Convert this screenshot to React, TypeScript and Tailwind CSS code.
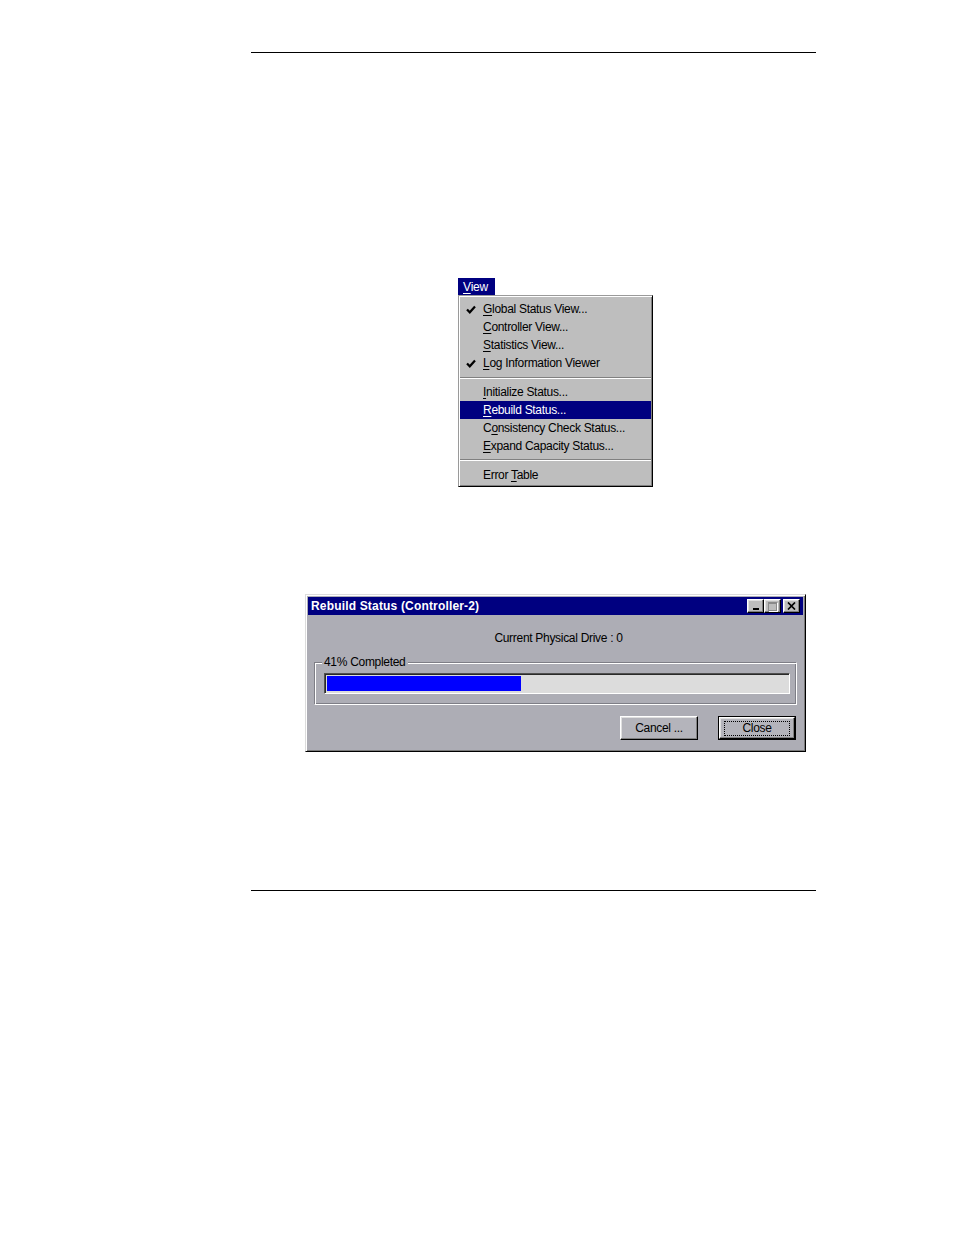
import React from "react";

// Win95-ish bevels
const raised =
  "border border-t-white border-l-white border-r-black border-b-black shadow-[inset_-1px_-1px_0_#808080,inset_1px_1px_0_#dfdfdf]";

type Item = { label: string; u: number; checked?: boolean; active?: boolean } | "sep" | "sep2";

const ITEMS: Item[] = [
  { label: "Global Status View...", u: 0, checked: true },
  { label: "Controller View...", u: 0 },
  { label: "Statistics View...", u: 0 },
  { label: "Log Information Viewer", u: 0, checked: true },
  "sep",
  { label: "Initialize Status...", u: 0 },
  { label: "Rebuild Status...", u: 0, active: true },
  { label: "Consistency Check Status...", u: 1 },
  { label: "Expand Capacity Status...", u: 0 },
  "sep2",
  { label: "Error Table", u: 6 },
];

function Underlined({ text, u }: { text: string; u: number }) {
  return (
    <>
      {text.slice(0, u)}
      <span className="underline underline-offset-[2px]">{text[u]}</span>
      {text.slice(u + 1)}
    </>
  );
}

function Check() {
  return (
    <svg width="10" height="9" viewBox="0 0 10 9" className="block">
      <path d="M1 4.5 L3.8 7.3 L9 1.5" stroke="currentColor" strokeWidth="2.2" fill="none" />
    </svg>
  );
}

function ViewMenu() {
  return (
    <div className="ml-[458px] mt-[225px] w-[195px] font-['Liberation_Sans',Arial,sans-serif] text-[12px] tracking-[-0.3px] leading-none">
      <div className="flex h-[17px] w-[37px] items-center bg-[#000080] pl-[5px] text-white">
        <Underlined text="View" u={0} />
      </div>
      <div className="border border-t-[#9a9a9a] border-l-[#9a9a9a] border-r-black border-b-black pt-[4px] pb-[2px] shadow-[inset_1px_1px_0_#ffffff,inset_-1px_-1px_0_#808080] bg-[#bebebe] px-[1px]">
        {ITEMS.map((it, i) => {
          if (it === "sep" || it === "sep2") {
            return (
              <div key={i} className={it === "sep" ? "pt-[5px] pb-[4px]" : "pt-[4px] pb-[5px]"}>
                <div className="h-px bg-[#808080]" />
                <div className="h-px bg-white" />
              </div>
            );
          }
          return (
            <div
              key={i}
              className={`flex h-[18px] items-center ${it.active ? "bg-[#000080] text-white" : "text-black"}`}
            >
              <div className="w-[23px] pl-[6px]">{it.checked && <Check />}</div>
              <span>
                <Underlined text={it.label} u={it.u} />
              </span>
            </div>
          );
        })}
      </div>
    </div>
  );
}

function TitleButton({ kind }: { kind: "min" | "max" | "close" }) {
  return (
    <div className={`flex h-[14px] w-[17px] items-center justify-center bg-[#bdbdbd] ${raised}`}>
      {kind === "min" && <div className="mt-[6px] h-[2px] w-[6px] bg-black" />}
      {kind === "max" && (
        <div className="h-[9px] w-[9px] border border-t-2 border-[#8a8a8a] shadow-[1px_1px_0_#ffffff]" />
      )}
      {kind === "close" && (
        <svg width="9" height="8" viewBox="0 0 9 8">
          <path d="M1 0.5 L8 7.5 M8 0.5 L1 7.5" stroke="black" strokeWidth="1.7" />
        </svg>
      )}
    </div>
  );
}

function Button({ label, isDefault }: { label: string; isDefault?: boolean }) {
  if (isDefault) {
    return (
      <div className="h-[24px] w-[78px] border border-black">
        <div className={`flex h-full w-full items-center justify-center bg-[#b4b4bb] ${raised}`}>
          <div className="flex h-[15px] w-[66px] items-center justify-center border border-dotted border-black">
            {label}
          </div>
        </div>
      </div>
    );
  }
  return (
    <div className={`flex h-[24px] w-[78px] items-center justify-center bg-[#b4b4bb] ${raised}`}>
      {label}
    </div>
  );
}

function RebuildDialog() {
  const pct = 41;
  return (
    <div className="ml-[305px] mt-[107px] w-[501px] border border-t-[#dcdcdc] border-l-[#dcdcdc] border-r-black border-b-black bg-[#adadb5] p-[1px] shadow-[inset_1px_1px_0_#ffffff,inset_-1px_-1px_0_#7a7a7a] font-['Liberation_Sans',Arial,sans-serif] text-[12px] tracking-[-0.3px] leading-none text-black">
      <div className="mx-[1px] mt-[1px] flex h-[18px] items-center justify-between bg-[#000080] pl-[3px] pr-[3px]">
        <span className="font-bold tracking-[0.17px] text-white">Rebuild Status (Controller-2)</span>
        <div className="flex items-center">
          <TitleButton kind="min" />
          <TitleButton kind="max" />
          <div className="w-[2px]" />
          <TitleButton kind="close" />
        </div>
      </div>
      <div className="px-[7px] pb-[10px]">
        <div className="flex h-[38px] items-center justify-center pt-[8px] pl-[6px]">
          Current Physical Drive : 0
        </div>
        <div className="relative mt-[9px] h-[43px] border border-t-[#7e7e86] border-l-[#7e7e86] border-r-white border-b-white shadow-[inset_1px_1px_0_#ffffff,inset_-1px_-1px_0_#7e7e86]">
          <span className="absolute left-[7px] top-[-7px] bg-[#adadb5] px-[2px]">{pct}% Completed</span>
          <div className="ml-[9px] mr-[6px] mt-[10px] h-[21px] border border-t-[#505050] border-l-[#505050] border-r-white border-b-white shadow-[inset_1px_1px_0_#2a2a2a] bg-[#dcdcdc] p-[2px]">
            <div className="h-full bg-[#0000ff]" style={{ width: `${pct * (460 / 100) * 1.03}px` }} />
          </div>
        </div>
        <div className="mt-[11px] flex justify-end gap-[20px] pr-[1px]">
          <Button label="Cancel ..." />
          <Button label="Close" isDefault />
        </div>
      </div>
    </div>
  );
}

export default function App() {
  return (
    <div className="min-h-[1235px] w-[954px] bg-white pt-[52px]">
      <div className="ml-[251px] h-px w-[565px] bg-black" />
      <ViewMenu />
      <RebuildDialog />
      <div className="ml-[251px] mt-[138px] h-px w-[565px] bg-black" />
    </div>
  );
}
